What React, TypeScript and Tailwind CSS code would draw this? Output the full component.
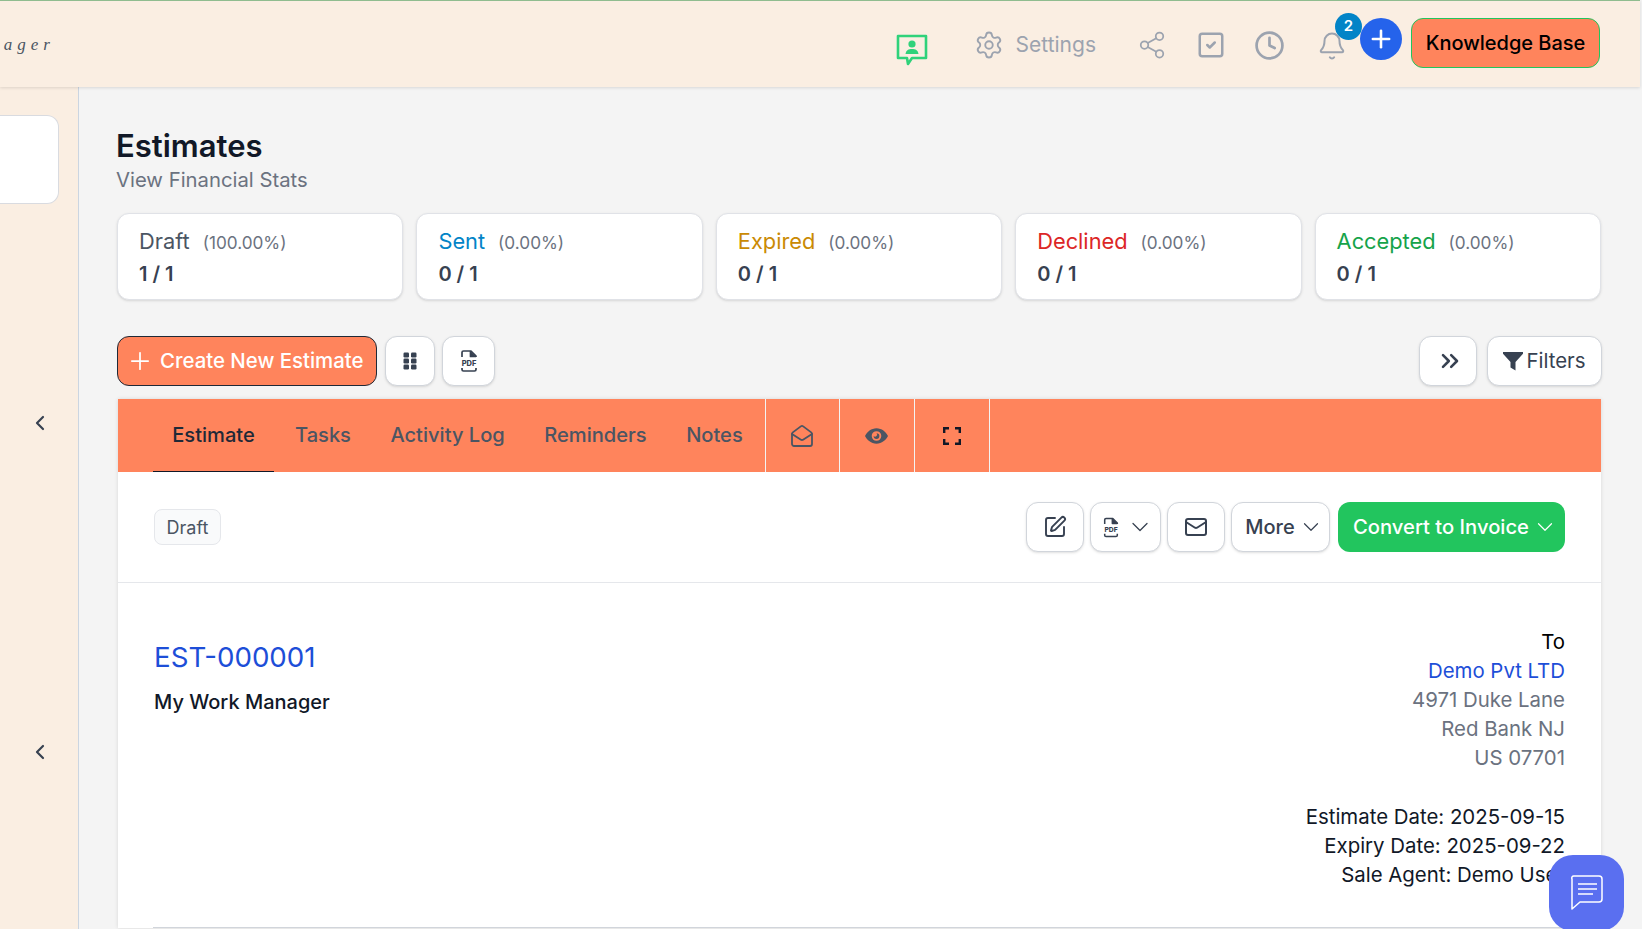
import {
  Bell,
  ChevronDown,
  ChevronLeft,
  ChevronsRight,
  Clock,
  Mail,
  MailOpen,
  Plus,
  Settings,
  Share2,
  SquareCheck,
  SquarePen,
} from "lucide-react";

const stats = [
  { label: "Draft", pct: "(100.00%)", value: "1 / 1", color: "text-[#4b5563]" },
  { label: "Sent", pct: "(0.00%)", value: "0 / 1", color: "text-[#0284c7]" },
  { label: "Expired", pct: "(0.00%)", value: "0 / 1", color: "text-[#ca8a04]" },
  { label: "Declined", pct: "(0.00%)", value: "0 / 1", color: "text-[#dc2626]" },
  { label: "Accepted", pct: "(0.00%)", value: "0 / 1", color: "text-[#16a34a]" },
];

function PdfIcon({ className }: { className?: string }) {
  return (
    <svg viewBox="0 0 20 24" className={className} fill="none" stroke="#374151" strokeWidth="1.7">
      <path d="M3 8V3.5A1.5 1.5 0 0 1 4.5 2H12l5 5v1" strokeLinejoin="round" />
      <path d="M11.5 2v5.5H17" fill="#374151" strokeLinejoin="round" />
      <path d="M3 19v1.5A1.5 1.5 0 0 0 4.5 22h11a1.5 1.5 0 0 0 1.5-1.5V19" />
      <text x="10" y="16.5" textAnchor="middle" fontSize="7.5" fontWeight="800" fill="#374151" stroke="none" fontFamily="Inter, sans-serif">
        PDF
      </text>
    </svg>
  );
}

function GripIcon() {
  return (
    <svg viewBox="0 0 14 18" className="h-[18px] w-[14px]" fill="#374151">
      <rect x="0.5" y="0.5" width="5.5" height="5" rx="1.2" />
      <rect x="8" y="0.5" width="5.5" height="5" rx="1.2" />
      <rect x="0.5" y="6.500" width="5.5" height="5" rx="1.2" />
      <rect x="8" y="6.500" width="5.5" height="5" rx="1.2" />
      <rect x="0.5" y="12.500" width="5.5" height="5" rx="1.2" />
      <rect x="8" y="12.500" width="5.5" height="5" rx="1.2" />
    </svg>
  );
}

function ContactChatIcon() {
  return (
    <svg viewBox="0 0 32 32" className="h-[32px] w-[32px]" fill="none">
      <path d="M2 2h28v22H16l-4 6-1-6H2z" stroke="#2fd27a" strokeWidth="2.6" strokeLinejoin="round" />
      <circle cx="16" cy="10" r="3.6" fill="#2fd27a" />
      <path d="M9.5 20c.6-3.800 3-5 6.500-5s5.900 1.200 6.500 5z" fill="#2fd27a" />
    </svg>
  );
}

function EyeIcon() {
  return (
    <svg viewBox="0 0 24 16" className="h-[16px] w-[23px]">
      <path fill="#4b5563" fillRule="evenodd" d="M12 0c5.500 0 9.800 3.800 12 8-2.200 4.200-6.500 8-12 8S2.200 12.200 0 8c2.200-4.200 6.500-8 12-8zm0 3a5 5 0 1 0 0 10 5 5 0 0 0 0-10z" />
      <path fill="#4b5563" d="M12 5a3 3 0 1 1-3 3 1.800 1.800 0 0 0 3-3z" />
    </svg>
  );
}

function FullscreenIcon() {
  return (
    <svg viewBox="0 0 18 18" className="h-[18px] w-[18px]" fill="none" stroke="#111827" strokeWidth="2.400">
      <path d="M1.200 6V1.200H6M12 1.200h4.800V6M16.800 12v4.800H12M6 16.800H1.200V12" />
    </svg>
  );
}

function FunnelIcon() {
  return (
    <svg viewBox="0 0 20 20" className="h-[20px] w-[20px]" fill="#374151">
      <path d="M0 1h20v1.800L12.500 11v8.500l-5-3V11L0 2.800z" />
    </svg>
  );
}

function ChatBubbleIcon() {
  return (
    <svg viewBox="0 0 36 36" className="h-[36px] w-[36px]" fill="none" stroke="#fff" strokeWidth="1.500">
      <path d="M5 1h25a3 3 0 0 1 3 3v20a3 3 0 0 1-3 3H11l-8 7V4a2 2 0 0 1 2-3z" strokeLinejoin="round" />
      <path d="M9 9h19M9 14h19M9 19h15" />
    </svg>
  );
}

function IconButton({ children, className }: { children: React.ReactNode; className: string }) {
  return (
    <button className={`flex h-[50px] items-center justify-center rounded-[12px] border border-[#d1d5db] bg-white text-[#374151] shadow-sm ${className}`}>
      {children}
    </button>
  );
}

export default function App() {
  return (
    <div className="flex h-[929px] w-[1642px] flex-col overflow-hidden bg-[#f4f4f4] font-['Inter',sans-serif]">
      <header className="z-10 flex h-[87px] w-[1640px] shrink-0 items-center justify-between border-t border-[#8fbc8f] bg-[#faeee2] shadow-[0_1px_3px_rgba(0,0,0,0.12)]">
        <div className="mt-[2px] w-[55px] overflow-hidden whitespace-nowrap text-right font-['Liberation_Serif',serif] text-[17px] italic tracking-[5px] text-[#4b5563]" dir="rtl">
          <span>nager</span>
        </div>
        <div className="flex items-center">
          <div className="mt-[11px]"><ContactChatIcon /></div>
          <div className="ml-[46px] mt-[2px] flex items-center text-[#9ca3af]">
            <Settings size={30} strokeWidth={1.5} />
            <span className="ml-[12px] text-[21px]">Settings</span>
          </div>
          <Share2 size={30} strokeWidth={1.4} className="ml-[41px] mt-[2px] text-[#9ca3af]" />
          <SquareCheck size={30} strokeWidth={2} className="ml-[29px] mt-[2px] text-[#9ca3af]" />
          <Clock size={31} strokeWidth={2.1} className="ml-[28px] mt-[2px] text-[#9ca3af]" />
          <Bell size={30} strokeWidth={1.6} className="ml-[32px] mt-[4px] text-[#9ca3af]" />
          <div className="relative mb-[10px] ml-[13px]">
            <span className="absolute -left-[25px] -top-[5px] z-10 flex h-[27px] w-[27px] items-center justify-center rounded-full bg-[#0284c7] text-[15px] font-semibold text-white">2</span>
            <span className="flex h-[42px] w-[42px] items-center justify-center rounded-full bg-[#2563eb] text-white">
              <Plus size={28} strokeWidth={2.2} />
            </span>
          </div>
          <button className="mb-[2px] ml-[9px] mr-[40px] flex h-[50px] w-[189px] items-center justify-center rounded-[12px] border border-[#22c55e] bg-[#ff845c] text-[20px] font-medium text-black">
            Knowledge Base
          </button>
        </div>
      </header>

      <div className="flex min-h-0 flex-1">
        <aside className="flex w-[79px] shrink-0 flex-col border-r border-[#cbd5e1] bg-[#faeee2]">
          <div className="mt-[28px] h-[89px] w-[59px] rounded-r-[12px] border border-l-0 border-[#d9dbe0] bg-white" />
          <ChevronLeft size={24} strokeWidth={2.2} className="ml-[28px] mt-[207px] text-[#374151]" />
          <ChevronLeft size={24} strokeWidth={2.2} className="ml-[28px] mt-[305px] text-[#374151]" />
        </aside>

        <main className="min-w-0 flex-1 pl-[38px] pr-[40px]">
          <h1 className="-ml-[1px] mt-[37px] text-[31px] font-semibold leading-[44px] text-[#111827]">Estimates</h1>
          <p className="-ml-[1px] text-[20.300px] leading-[24px] text-[#6b7280]">View Financial Stats</p>

          <div className="mr-[1px] mt-[21px] grid grid-cols-5 gap-[13px]">
            {stats.map((s) => (
              <div key={s.label} className="h-[87px] rounded-[12px] border border-[#e0e2e7] bg-white pl-[21px] pt-[11px] shadow-sm">
                <div className="flex items-baseline">
                  <span className={`text-[21.800px] ${s.color}`}>{s.label}</span>
                  <span className="ml-[13px] text-[17.200px] text-[#6b7280]">{s.pct}</span>
                </div>
                <div className="mt-[1px] text-[20px] font-semibold text-[#374151]">{s.value}</div>
              </div>
            ))}
          </div>

          <div className="mt-[36px] flex items-center">
            <button className="flex h-[50px] w-[260px] items-center rounded-[12px] border border-[#1f2937] bg-[#ff845c] pl-[8px] text-[20.400px] font-medium text-white">
              <Plus size={28} strokeWidth={1.5} />
              <span className="ml-[6px]">Create New Estimate</span>
            </button>
            <IconButton className="ml-[8px] w-[50px]"><GripIcon /></IconButton>
            <IconButton className="ml-[7px] w-[53px]"><PdfIcon className="h-[24px] w-[20px]" /></IconButton>
            <div className="flex-1" />
            <IconButton className="w-[58px] pl-[3px]"><ChevronsRight size={28} strokeWidth={2.200} /></IconButton>
            <IconButton className="ml-[10px] w-[115px]">
              <FunnelIcon />
              <span className="ml-[3px] text-[20.400px]">Filters</span>
            </IconButton>
          </div>

          <section className="ml-[1px] mr-[1px] mt-[13px] bg-white shadow-[0_0_4px_rgba(0,0,0,0.12)]">
            <nav className="flex h-[73px] items-stretch bg-[#ff845c] pl-[35px] text-[20.100px] font-medium">
              <div className="flex w-[121px] items-center justify-center border-b border-[#111827] text-[#1f2937]">Estimate</div>
              <div className="ml-[21px] flex items-center text-[#4b5563]">Tasks</div>
              <div className="ml-[39.500px] flex items-center text-[#4b5563]">Activity Log</div>
              <div className="ml-[39.500px] flex items-center text-[#4b5563]">Reminders</div>
              <div className="ml-[39.500px] flex items-center text-[#4b5563]">Notes</div>
              <div className="ml-[22px] flex w-[75px] items-center justify-center border-x border-[#f3f3f3] text-[#4b5563]"><MailOpen size={24} strokeWidth={1.8} /></div>
              <div className="flex w-[75px] items-center justify-center border-r border-[#f3f3f3]"><EyeIcon /></div>
              <div className="flex w-[75px] items-center justify-center border-r border-[#f3f3f3]"><FullscreenIcon /></div>
            </nav>

            <div className="flex h-[111px] items-center justify-between border-b border-[#e5e7eb] pl-[36px] pr-[36px]">
              <span className="flex h-[36px] w-[67px] items-center justify-center rounded-[8px] border border-[#e5e7eb] bg-[#f9fafb] text-[18px] text-[#4b5563]">Draft</span>
              <div className="flex items-center">
                <IconButton className="w-[58px]"><SquarePen size={24} strokeWidth={1.9} /></IconButton>
                <IconButton className="ml-[6px] w-[71px] gap-[6px] pl-[4px]">
                  <PdfIcon className="h-[23px] w-[18px]" />
                  <ChevronDown size={28} strokeWidth={1.1} />
                </IconButton>
                <IconButton className="ml-[6px] w-[58px]"><Mail size={24} strokeWidth={2} /></IconButton>
                <IconButton className="ml-[6px] w-[99px] pl-[8px]">
                  <span className="text-[20px] font-medium">More</span>
                  <ChevronDown size={26} strokeWidth={1.1} className="ml-[3px]" />
                </IconButton>
                <button className="ml-[8px] flex h-[50px] w-[227px] items-center justify-center rounded-[12px] bg-[#22c55e] pl-[8px] text-[20.200px] font-medium text-white">
                  Convert to Invoice
                  <ChevronDown size={26} strokeWidth={1.1} className="ml-[3px]" />
                </button>
              </div>
            </div>

            <div className="flex justify-between px-[35px] pt-[44px]">
              <div className="pt-[10px]">
                <div className="ml-[1px] text-[27.700px] leading-[40px] text-[#1d4ed8]">EST-000001</div>
                <div className="ml-[1px] mt-[10px] text-[20px] font-medium leading-[30px] text-[#111827]">My Work Manager</div>
              </div>
              <div className="mr-[1px] text-right text-[20.400px] leading-[29px] text-[#111827]">
                <div className="text-black">To</div>
                <div className="text-[#1d4ed8]">Demo Pvt LTD</div>
                <div className="text-[#6b7280]">4971 Duke Lane</div>
                <div className="text-[#6b7280]">Red Bank NJ</div>
                <div className="text-[#6b7280]">US 07701</div>
                <div className="mt-[30px]">Estimate Date: 2025-09-15</div>
                <div>Expiry Date: 2025-09-22</div>
                <div>Sale Agent: Demo User</div>
              </div>
            </div>
            <div className="mx-[35px] mt-[38px] border-t border-[#d1d5db]" />
          </section>
        </main>
      </div>

      <button className="fixed left-[1549px] top-[855px] flex h-[76px] w-[75px] items-center justify-center rounded-[24px] bg-[#5a6ff0]">
        <ChatBubbleIcon />
      </button>
    </div>
  );
}
